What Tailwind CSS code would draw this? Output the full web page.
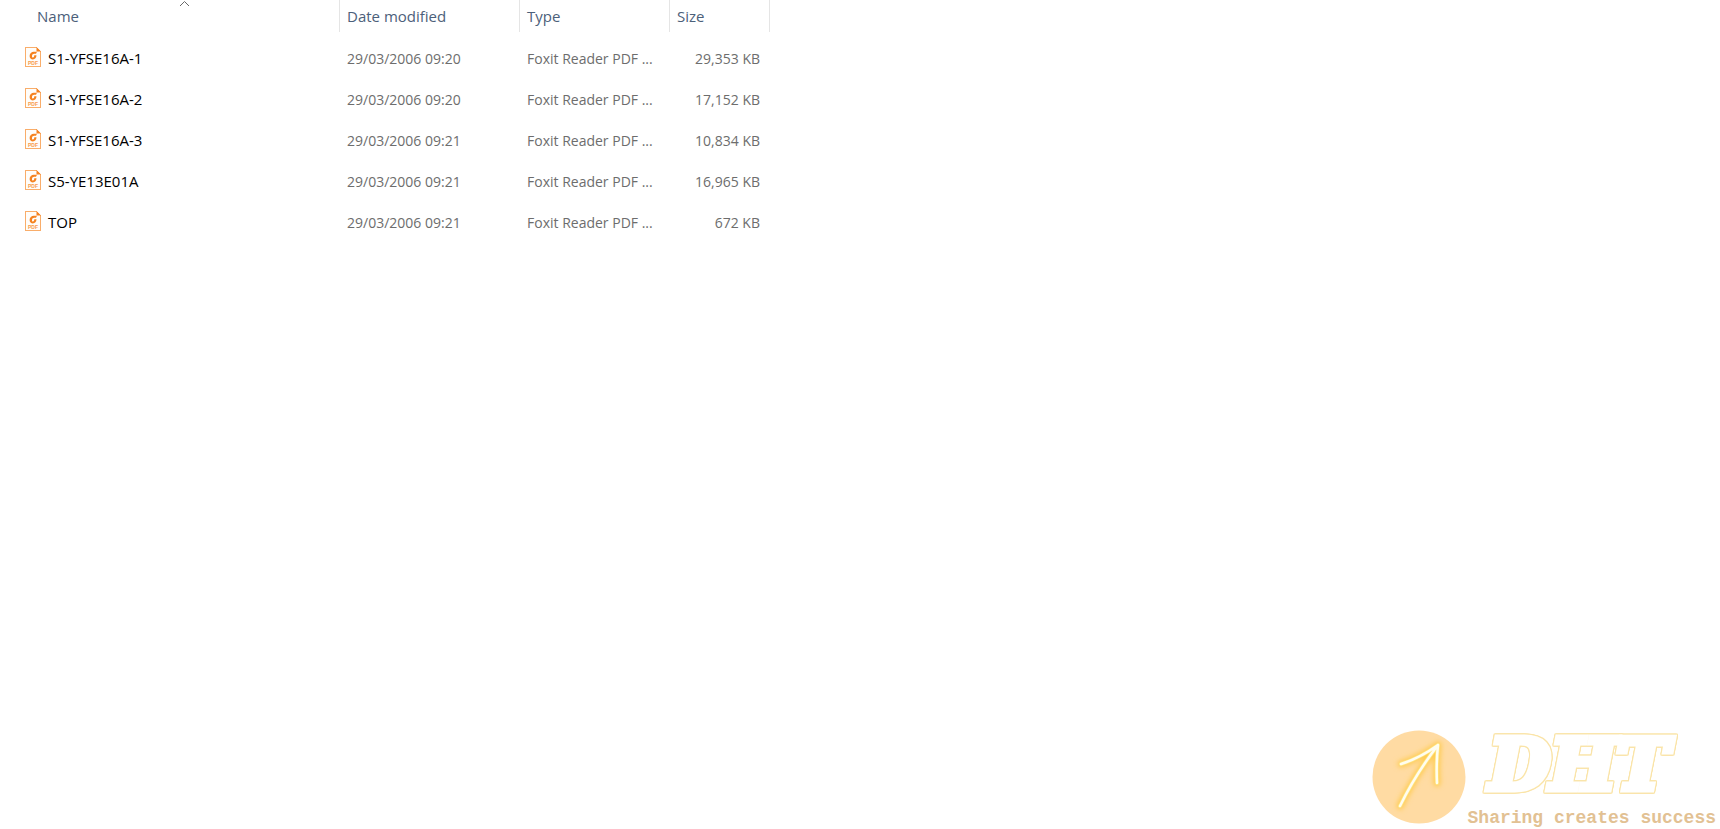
<!DOCTYPE html>
<html lang="en">
<head>
<meta charset="utf-8">
<title>Files</title>
<script src="https://cdn.jsdelivr.net/npm/@tailwindcss/browser@4"></script>
</head>
<body class="bg-white">
<svg class="hidden" aria-hidden="true">
  <symbol id="pdf" viewBox="0 0 16 20">
    <path d="M.5.5H11.5L15.5 4.5V19.5H.5Z" fill="#fffdfa" stroke="#f9ad6a" shape-rendering="crispEdges"/>
    <path d="M11.500 0L16 4.500H11.500Z" fill="#f58220"/>
    <path fill-rule="evenodd" d="M12 4.800H8.800C6.500 4.800 4.600 6.600 4.600 9C4.600 11.300 6.100 12.400 7.900 12.400C10 12.400 11.400 11 11.500 8.300H9.300C9.200 9.700 8.700 10.500 8 10.500C7.300 10.500 6.900 10 7 9C7.100 7.600 8 6.700 9.300 6.700H11Z" fill="#f58220"/>
    <text x="8" y="17.500" text-anchor="middle" font-family="Liberation Sans, sans-serif" font-size="5" font-weight="bold" fill="#f79a4d">PDF</text>
  </symbol>
</svg>
<div class="flex min-h-screen flex-col justify-between font-['Open_Sans','Noto_Sans',sans-serif] text-sm leading-5 text-[#6d6d6d]">
  <main class="overflow-x-auto">
    <table class="w-[770px] table-fixed border-collapse text-left">
      <colgroup><col class="w-[340px]"><col class="w-[180px]"><col class="w-[150px]"><col class="w-[100px]"></colgroup>
      <thead class="text-[15px] leading-5 text-[#4c607a]">
        <tr class="h-[38px] align-top">
          <th class="p-0 font-normal" aria-sort="ascending"><button class="relative block h-8 w-full border-r border-[#e5e5e5] pl-[37px] text-left">Name
            <svg class="absolute top-0 left-[179px] h-[7px] w-[11px]" viewBox="0 0 11 7" fill="none" stroke="#686868" aria-hidden="true"><path d="M1 6L5.500 1.500L10 6"/></svg></button></th>
          <th class="p-0 font-normal"><button class="block h-8 w-full border-r border-[#e5e5e5] pl-[7px] text-left">Date modified</button></th>
          <th class="p-0 font-normal"><button class="block h-8 w-full border-r border-[#e5e5e5] pl-[7px] text-left">Type</button></th>
          <th class="p-0 font-normal"><button class="block h-8 w-full border-r border-[#e5e5e5] pl-[7px] text-left">Size</button></th>
        </tr>
      </thead>
      <tbody>
        <tr class="h-[41px]"><td class="p-0 pl-[25px] text-[15px] leading-5 text-black"><div class="flex items-center gap-[7px]"><svg class="mb-[3px] h-5 w-4" aria-hidden="true"><use href="#pdf"/></svg><span class="pb-0.5">S1-YFSE16A-1</span></div></td><td class="p-0 pl-[7px]">29/03/2006 09:20</td><td class="p-0 pl-[7px]">Foxit Reader PDF ...</td><td class="p-0 pr-[10px] text-right">29,353 KB</td></tr>
        <tr class="h-[41px]"><td class="p-0 pl-[25px] text-[15px] leading-5 text-black"><div class="flex items-center gap-[7px]"><svg class="mb-[3px] h-5 w-4" aria-hidden="true"><use href="#pdf"/></svg><span class="pb-0.5">S1-YFSE16A-2</span></div></td><td class="p-0 pl-[7px]">29/03/2006 09:20</td><td class="p-0 pl-[7px]">Foxit Reader PDF ...</td><td class="p-0 pr-[10px] text-right">17,152 KB</td></tr>
        <tr class="h-[41px]"><td class="p-0 pl-[25px] text-[15px] leading-5 text-black"><div class="flex items-center gap-[7px]"><svg class="mb-[3px] h-5 w-4" aria-hidden="true"><use href="#pdf"/></svg><span class="pb-0.5">S1-YFSE16A-3</span></div></td><td class="p-0 pl-[7px]">29/03/2006 09:21</td><td class="p-0 pl-[7px]">Foxit Reader PDF ...</td><td class="p-0 pr-[10px] text-right">10,834 KB</td></tr>
        <tr class="h-[41px]"><td class="p-0 pl-[25px] text-[15px] leading-5 text-black"><div class="flex items-center gap-[7px]"><svg class="mb-[3px] h-5 w-4" aria-hidden="true"><use href="#pdf"/></svg><span class="pb-0.5">S5-YE13E01A</span></div></td><td class="p-0 pl-[7px]">29/03/2006 09:21</td><td class="p-0 pl-[7px]">Foxit Reader PDF ...</td><td class="p-0 pr-[10px] text-right">16,965 KB</td></tr>
        <tr class="h-[41px]"><td class="p-0 pl-[25px] text-[15px] leading-5 text-black"><div class="flex items-center gap-[7px]"><svg class="mb-[3px] h-5 w-4" aria-hidden="true"><use href="#pdf"/></svg><span class="pb-0.5">TOP</span></div></td><td class="p-0 pl-[7px]">29/03/2006 09:21</td><td class="p-0 pl-[7px]">Foxit Reader PDF ...</td><td class="p-0 pr-[10px] text-right">672 KB</td></tr>
      </tbody>
    </table>
  </main>
  <footer class="flex items-end self-end pr-1">
    <svg class="mb-[5px] h-[94px] w-[94px]" viewBox="0 0 94 94" fill="none" stroke-linecap="round" stroke-linejoin="round" aria-hidden="true">
      <defs>
        <filter id="glow" x="-30%" y="-30%" width="160%" height="160%"><feGaussianBlur stdDeviation="2.500"/></filter>
      </defs>
      <circle cx="47" cy="47" r="46.500" fill="#ffdba3"/>
      <path d="M28 76Q43 45 66 15M29 34Q48 28 66 15Q64 34 65 53" stroke="#ffcc52" stroke-width="7" filter="url(#glow)"/>
      <path d="M28 76Q43 45 66 15M29 34Q48 28 66 15Q64 34 65 53" stroke="#ffe680" stroke-width="4"/>
      <path d="M28 76Q43 45 66 15M29 34Q48 28 66 15Q64 34 65 53" stroke="#fffdf0" stroke-width="2.500"/>
    </svg>
    <div class="pl-0.5">
      <div class="pb-2 pl-[22px] font-['DejaVu_Serif',serif] text-[70px] leading-[70px] font-bold text-white italic [-webkit-text-stroke:7px_white] [filter:drop-shadow(1px_0_#fae4a8)_drop-shadow(0_1px_#fae4a8)_drop-shadow(-1px_0_#fae4a8)_drop-shadow(0_-1px_#fae4a8)]">DHT</div>
      <div class="pb-px font-['Liberation_Mono',monospace] text-lg leading-5 font-bold whitespace-nowrap text-[#e2c193]">Sharing creates success</div>
    </div>
  </footer>
</div>
</body>
</html>
